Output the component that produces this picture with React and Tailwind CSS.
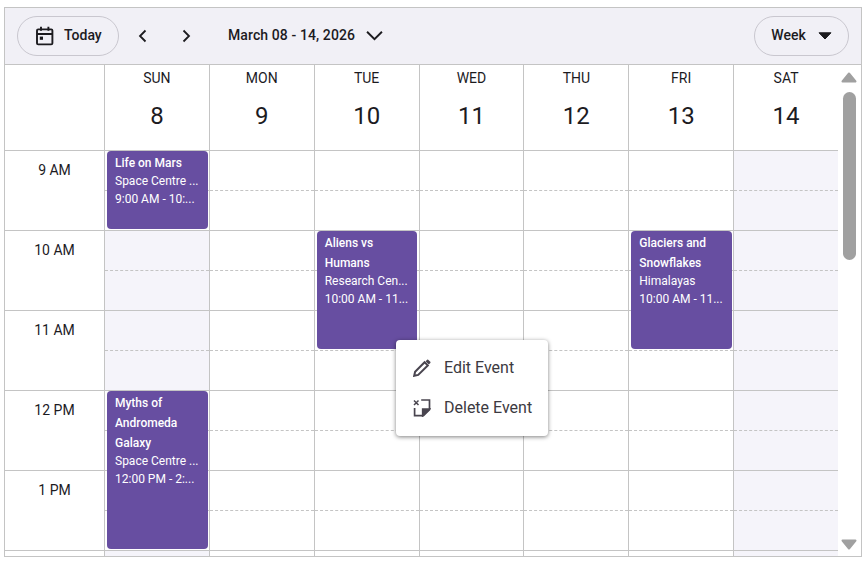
const days = [
  ["SUN", 8], ["MON", 9], ["TUE", 10], ["WED", 11], ["THU", 12], ["FRI", 13], ["SAT", 14],
];
const times = ["9 AM", "10 AM", "11 AM", "12 PM", "1 PM", ""];

const shaded = {
  0: [false, true, true, false, false, true],
  6: [true, true, true, true, true, true],
};

const events = {
  0: [
    { title: ["Life on Mars"], loc: "Space Centre ...", time: "9:00 AM - 10:...", top: "top-0", h: "h-[78px]" },
    { title: ["Myths of", "Andromeda", "Galaxy"], loc: "Space Centre ...", time: "12:00 PM - 2:...", top: "top-[240px]", h: "h-[158px]" },
  ],
  2: [{ title: ["Aliens vs", "Humans"], loc: "Research Cen...", time: "10:00 AM - 11...", top: "top-[80px]", h: "h-[118px]" }],
  5: [{ title: ["Glaciers and", "Snowflakes"], loc: "Himalayas", time: "10:00 AM - 11...", top: "top-[80px]", h: "h-[118px]" }],
};

function CalendarIcon() {
  return (
    <svg width="20" height="20" viewBox="0 0 20 20" fill="none" stroke="#1c1b1f" strokeWidth="1.9">
      <rect x="2" y="3.4" width="15.4" height="15" rx="1.2" />
      <path d="M2 8h15.4M6 0.8v4M13.4 0.8v4" />
      <rect x="4.8" y="10.6" width="3.2" height="3.2" fill="#1c1b1f" stroke="none" />
    </svg>
  );
}

function Chevron({ d, w = 16, h = 16 }) {
  return (
    <svg width={w} height={h} viewBox="0 0 16 16" fill="none" stroke="#1c1b1f" strokeWidth="1.8">
      <path d={d} />
    </svg>
  );
}

function EditIcon() {
  return (
    <svg width="18" height="18" viewBox="0 0 18 18" fill="none" stroke="#49454f" strokeWidth="2">
      <path d="M1.2 16.8l.9-4L11.6 3.2l3.2 3.2L5.2 15.9z" />
      <path d="M12.6 2.2l1.5-1.5a.8.8 0 0 1 1.1 0l2.1 2.1a.8.8 0 0 1 0 1.1l-1.5 1.5z" fill="#49454f" stroke="none" />
    </svg>
  );
}

function DeleteIcon() {
  return (
    <svg width="18" height="18" viewBox="0 0 18 18" fill="none" stroke="#49454f" strokeWidth="1.7">
      <path d="M1 1.5l4.5 4.5M5.5 1.5L1 6" strokeWidth="1.5" />
      <path d="M8.2 1h8.3v9.6L10.4 16.7H1.6V9" />
      <path d="M16.5 10h-6.8v6.7z" fill="#49454f" />
    </svg>
  );
}

function EventCard({ e }) {
  return (
    <div className={`absolute left-[2px] w-[100.6px] ${e.top} ${e.h} z-10 rounded-[4px] bg-[#674ea1] px-2 text-xs text-white overflow-hidden`}>
      <div className="pt-[2px]">
        {e.title.map((t) => (
          <div key={t} className="h-5 leading-5 font-medium whitespace-nowrap">{t}</div>
        ))}
      </div>
      <div className="h-[18px] leading-[16px] whitespace-nowrap">{e.loc}</div>
      <div className="h-[18px] leading-[16px] whitespace-nowrap">{e.time}</div>
    </div>
  );
}

export default function App() {
  return (
    <div className="relative w-[868px] h-[565px] bg-white pt-[7px] pl-1 overflow-hidden font-['Roboto',sans-serif] text-[#1c1b1f]">
      <div className="flex flex-col w-[858px] h-[550px] border border-[#c4c4c4] overflow-hidden">
        {/* toolbar */}
        <div className="flex items-center shrink-0 h-[57px] pl-3 pr-3 pb-px bg-[#f1f0f6] border-b border-[#c4c4c4]">
          <button className="flex items-center w-[102px] h-10 pl-[17px] gap-[9px] rounded-full border border-[#c9c7cf] text-sm font-medium">
            <CalendarIcon />
            <span className="-mt-[2px]">Today</span>
          </button>
          <button className="flex items-center justify-center w-10 h-10 ml-1"><Chevron d="M10.5 2.5L5 8l5.5 5.5" /></button>
          <button className="flex items-center justify-center w-10 h-10 ml-[3px]"><Chevron d="M5.5 2.5L11 8l-5.5 5.5" /></button>
          <button className="flex items-center ml-[22px] h-10 gap-[11px] text-sm font-medium tracking-[0.1px]">
            <span className="-mt-[2px]">March 08 - 14, 2026</span>
            <Chevron d="M1 4.5l7 7 7-7" w={17} h={17} />
          </button>
          <button className="flex items-center justify-center ml-auto w-[95px] h-10 gap-[12px] rounded-full border border-[#c9c7cf] text-sm font-medium">
            <span className="-mt-[2px]">Week</span>
            <svg width="14" height="8" viewBox="0 0 14 8"><path d="M1 .8h12L7 7z" fill="#1c1b1f" stroke="#1c1b1f" strokeWidth="1" strokeLinejoin="round" /></svg>
          </button>
        </div>

        <div className="flex flex-1 min-h-0">
          <div className="w-[833px] shrink-0 overflow-hidden">
            {/* header */}
            <div className="grid grid-cols-[99px_repeat(7,1fr)] h-[86px] border-b border-[#c4c4c4]">
              <div />
              {days.map(([name, num]) => (
                <div key={name} className="flex flex-col items-center border-l border-[#c4c4c4]">
                  <div className="mt-[3px] h-5 leading-5 text-sm">{name}</div>
                  <div className="mt-[10px] h-9 leading-9 text-2xl">{num}</div>
                </div>
              ))}
            </div>
            {/* body */}
            <div className="grid grid-cols-[99px_repeat(7,1fr)]">
              <div className="flex flex-col">
                {times.map((t, i) => (
                  <div key={i} className="h-20 shrink-0 border-b border-[#c4c4c4]">
                    <div className="h-[38px] flex items-center justify-center text-sm">{t}</div>
                  </div>
                ))}
              </div>
              {days.map(([name], d) => (
                <div key={name} className="relative flex flex-col border-l border-[#c4c4c4]">
                  {times.map((_, i) => (
                    <div key={i} className={`h-20 shrink-0 border-b border-[#c4c4c4] ${shaded[d]?.[i] ? "bg-[#f5f4fa]" : "bg-white"}`}>
                      <div className="h-10 border-b border-dashed border-[#c4c4c4]" />
                    </div>
                  ))}
                  {(events[d] || []).map((e) => <EventCard key={e.title[0]} e={e} />)}
                </div>
              ))}
            </div>
          </div>
          {/* scrollbar */}
          <div className="flex flex-col items-center w-[23px] shrink-0 pr-[1px] pt-[7px]">
            <svg width="16" height="11" viewBox="0 0 16 11"><path d="M8 1.5L14.5 9.5H1.5z" fill="#a0a0a0" stroke="#a0a0a0" strokeWidth="2" strokeLinejoin="round" /></svg>
            <div className="mt-[9px] w-[13px] h-[168px] rounded-full bg-[#a0a0a0]" />
            <svg className="mt-auto mb-[6px]" width="16" height="11" viewBox="0 0 16 11"><path d="M8 9.5L14.5 1.5H1.5z" fill="#a0a0a0" stroke="#a0a0a0" strokeWidth="2" strokeLinejoin="round" /></svg>
          </div>
        </div>
      </div>

      {/* context menu */}
      <div className="absolute left-[396px] top-[340px] z-20 w-[152px] h-[96px] py-2 rounded-[4px] bg-white shadow-[0_1px_4px_rgba(0,0,0,0.5)] text-base text-[#3c3a41]">
        <div className="flex items-center h-10 pl-[17px] gap-[13px]"><EditIcon /><span>Edit Event</span></div>
        <div className="flex items-center h-10 pl-[17px] gap-[13px]"><DeleteIcon /><span>Delete Event</span></div>
      </div>
    </div>
  );
}
